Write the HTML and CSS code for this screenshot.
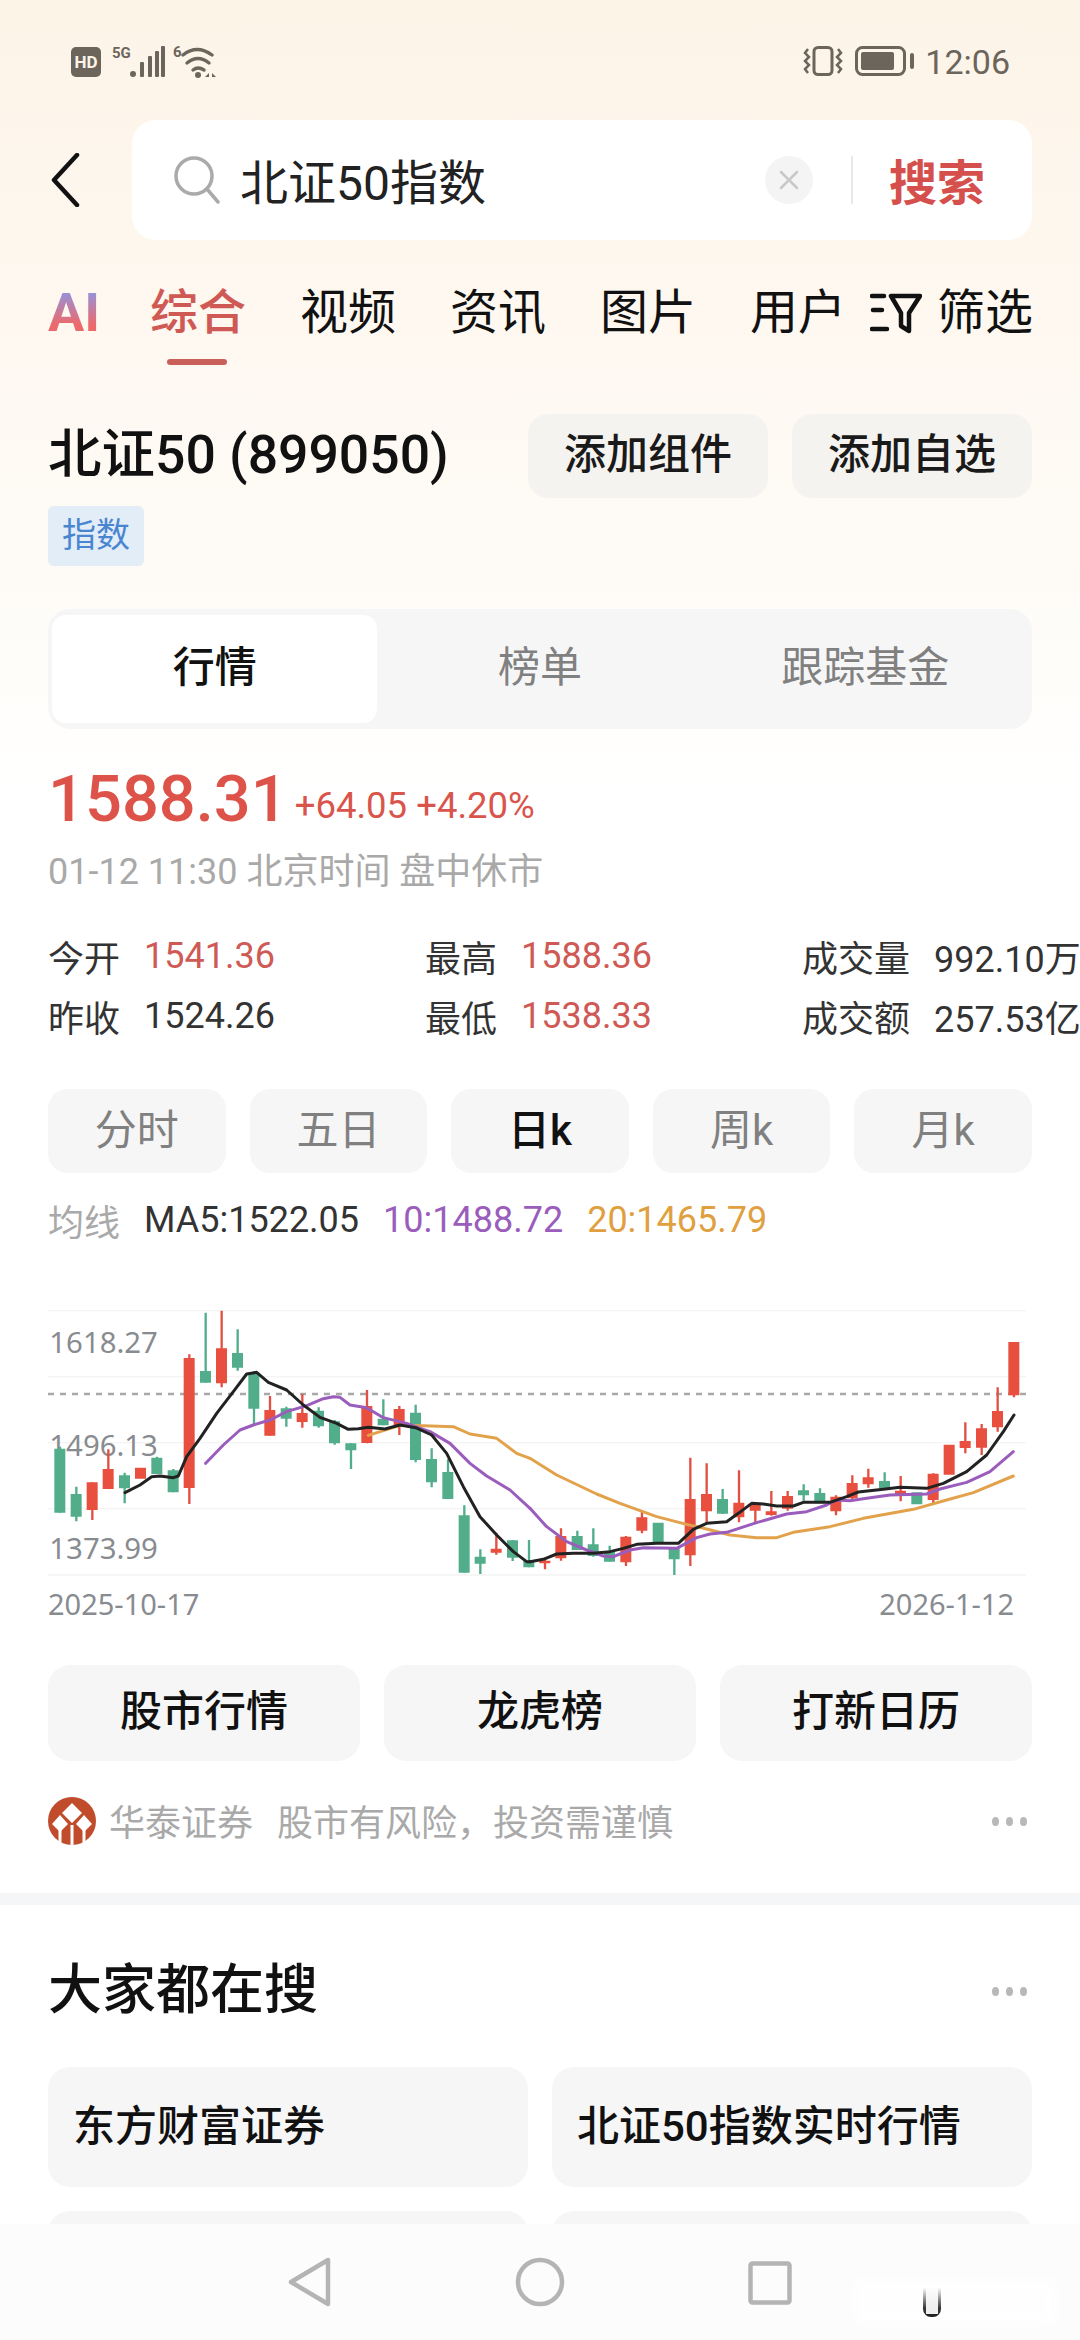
FILE: index.html
```html
<!DOCTYPE html>
<html lang="zh-CN">
<head>
<meta charset="utf-8">
<title>北证50指数</title>
<link rel="stylesheet" href="styles.css">
</head>
<body>
<div class="screen">
  <div class="status">
    <div class="status-left">
      <span class="hd">HD</span>
      <span class="net5g">5G</span>
      <svg class="bars" width="35" height="32" viewBox="0 0 35 32"><g fill="#6c655c"><circle cx="3" cy="28" r="3"/><rect x="10" y="16" width="4" height="15" rx="1"/><rect x="18" y="10" width="4" height="21" rx="1"/><rect x="25" y="5" width="4" height="26" rx="1"/><rect x="31" y="0" width="4" height="31" rx="1"/></g></svg>
      <span class="net6">6</span>
      <svg class="wifi" width="36" height="32" viewBox="0 0 36 32"><g fill="none" stroke="#6c655c" stroke-width="3.4" stroke-linecap="round"><path d="M2 9Q16-2 31 9"/><path d="M6 17Q17 8 28 17"/><path d="M12 24Q17 20 23 24"/></g><circle cx="17" cy="29" r="3" fill="#6c655c"/><path d="M24 31l4-4v4zM31 27l4 4h-4z" fill="#6c655c"/></svg>
    </div>
    <div class="status-right">
      <svg class="vib" width="40" height="30" viewBox="0 0 40 30"><rect x="11" y="1.500" width="18" height="27" rx="4" fill="none" stroke="#6c655c" stroke-width="3"/><g fill="none" stroke="#6c655c" stroke-width="2.500"><path d="M5 3L2 7l4 4-4 4 4 4-4 4 3 4"/><path d="M35 3l3 4-4 4 4 4-4 4 4 4-3 4"/></g></svg>
      <svg class="batt" width="60" height="30" viewBox="0 0 60 30"><rect x="1.500" y="1.500" width="48" height="27" rx="6" fill="none" stroke="#6c655c" stroke-width="3"/><rect x="6" y="6" width="33" height="18" rx="2" fill="#6c655c"/><rect x="55" y="7" width="4" height="16" rx="2" fill="#6c655c"/></svg>
      <span class="time">12:06</span>
    </div>
  </div>

  <div class="searchbar">
    <svg class="back" width="30" height="54" viewBox="0 0 30 54"><path d="M27 2L4 27l23 25" fill="none" stroke="#111" stroke-width="4.500" stroke-linecap="round" stroke-linejoin="round"/></svg>
    <div class="searchbox">
      <svg class="mag" width="48" height="48" viewBox="0 0 48 48"><circle cx="21" cy="20" r="18" fill="none" stroke="#aaa" stroke-width="3.500"/><path d="M34 33l11 13" stroke="#aaa" stroke-width="3.500" stroke-linecap="round"/></svg>
      <span class="query">北证50指数</span>
      <span class="clear"><svg width="22" height="22" viewBox="0 0 22 22"><path d="M3 3l16 16M19 3L3 19" stroke="#c9c9c9" stroke-width="2.500" stroke-linecap="round"/></svg></span>
      <span class="sep"></span>
      <span class="go">搜索</span>
    </div>
  </div>

  <div class="tabs">
    <span class="ai">AI</span>
    <span class="tab tab-on">综合</span>
    <span class="tab">视频</span>
    <span class="tab">资讯</span>
    <span class="tab">图片</span>
    <span class="tab">用户</span>
    <span class="filter">
      <svg width="52" height="42" viewBox="0 0 52 42"><g fill="none" stroke="#111" stroke-width="4.500" stroke-linejoin="round" stroke-linecap="round"><path d="M2 4h12M3 18h9M2 37h15"/><path d="M21 4h29L39 21v18l-8-5V21z"/></g></svg>
      <span>筛选</span>
    </span>
  </div>

  <div class="stock-head">
    <h1 class="stock-name">北证50 (899050)</h1>
    <span class="ghost-btn">添加组件</span>
    <span class="ghost-btn">添加自选</span>
  </div>
  <span class="badge">指数</span>

  <div class="segment">
    <span class="seg seg-on">行情</span>
    <span class="seg">榜单</span>
    <span class="seg">跟踪基金</span>
  </div>

  <div class="price-row">
    <span class="price">1588.31</span>
    <span class="change">+64.05 +4.20%</span>
  </div>
  <div class="date">01-12 11:30 北京时间 盘中休市</div>

  <div class="stats">
    <div class="stat"><span>今开</span><b class="up">1541.36</b></div>
    <div class="stat"><span>最高</span><b class="up">1588.36</b></div>
    <div class="stat"><span>成交量</span><b>992.10万</b></div>
    <div class="stat"><span>昨收</span><b>1524.26</b></div>
    <div class="stat"><span>最低</span><b class="up">1538.33</b></div>
    <div class="stat"><span>成交额</span><b>257.53亿</b></div>
  </div>

  <div class="periods">
    <span class="period">分时</span>
    <span class="period">五日</span>
    <span class="period period-on">日k</span>
    <span class="period">周k</span>
    <span class="period">月k</span>
  </div>

  <div class="ma">
    <span class="ma-label">均线</span>
    <span class="ma5">MA5:1522.05</span>
    <span class="ma10">10:1488.72</span>
    <span class="ma20">20:1465.79</span>
  </div>

  <svg class="chart" width="984" height="320" viewBox="54 0 2952 960">
    <g class="grid">
      <path d="M54 62H2988M54 260H2988M54 458H2988M54 656H2988M54 855H2988"/>
    </g>
    <path class="dash" d="M54 312H2988"/>
    <g class="axis">
      <text x="58" y="190">1618.27</text>
      <text x="58" y="497">1496.13</text>
      <text x="58" y="808">1373.99</text>
    </g>
    <!-- green wicks and bodies, left half -->
    <path class="w g" d="M90 470V668M139 590V694M284 548V640M381 500V552M430 537V607M527 68V278M623 118V242M672 243V405M769 350V410M866 352V413M914 390V464M963 460V537M1060 328V406M1157 344V517M1205 475V592M1254 508V627M1303 646V848M1351 778V852M1448 750V813M1497 750V832"/>
    <path class="b g" d="M73 476h33v192h-33zM122 612h33v68h-33zM267 556h33v39h-33zM364 503h33v49h-33zM413 541h33v66h-33zM510 243h33v35h-33zM606 189h33v44h-33zM655 250h33v106h-33zM752 355h33v31h-33zM849 362h33v47h-33zM897 394h33v66h-33zM946 460h33v21h-33zM1043 386h33v20h-33zM1140 368h33v142h-33zM1188 507h33v70h-33zM1237 546h33v81h-33zM1286 676h33v172h-33zM1334 800h33v21h-33zM1431 751h33v52h-33zM1480 812h33v20h-33z"/>
    <path class="w r" d="M187 577V690M235 478V597M478 193V642M575 62V292M720 318V437M817 312V413M1011 300V460M1108 348V435M1399 728V794M1545 810V838"/>
    <path class="b r" d="M170 577h33v83h-33zM218 537h33v60h-33zM315 533h33v33h-33zM461 204h33v390h-33zM558 175h33v105h-33zM703 360h33v77h-33zM800 369h33v27h-33zM994 348h33v111h-33zM1091 357h33v50h-33zM1382 776h33v12h-33zM1528 812h33v8h-33z"/>
    <!-- right half, measured from x = 1500 -->
    <g transform="translate(1500 0)">
      <path class="w g" d="M142 722V780M190 715V800M239 767V815M433 775V855M578 597V672M821 583V632M870 595V640M1064 547V597"/>
      <path class="b g" d="M125 738h33v42h-33zM173 763h33v35h-33zM222 785h33v30h-33zM368 698h33v62h-33zM416 775h33v33h-33zM561 627h33v44h-33zM804 601h33v15h-33zM853 609h33v31h-33zM1047 573h33v22h-33zM1144 607h33v36h-33z"/>
      <path class="w r" d="M93 715V812M288 738V828M336 665V730M481 503V828M530 520V700M627 541V697M676 640V697M724 603V677M773 603V662M918 616V676M967 556V632M1015 536V593M1112 558V634M1210 550V640M1306 397V490M1355 402V495M1403 292V425M1452 156V322"/>
      <path class="b r" d="M76 738h33v67h-33zM271 740h33v77h-33zM319 682h33v40h-33zM464 627h33v169h-33zM513 612h33v52h-33zM610 638h33v44h-33zM659 640h33v22h-33zM707 664h33v11h-33zM756 618h33v38h-33zM901 620h33v44h-33zM950 579h33v46h-33zM998 562h33v21h-33zM1095 602h33v14h-33zM1193 551h33v79h-33zM1241 464h33v90h-33zM1289 453h33v21h-33zM1338 415h33v58h-33zM1386 363h33v49h-33zM1435 156h33v160h-33z"/>
    </g>
    <polyline class="line orange" points="1015,436 1060,422 1110,406 1180,407 1270,410 1320,432 1400,445 1460,490 1500,505"/>
    <polyline class="line purple" points="527,520 580,465 630,420 670,405 720,390 770,365 830,347 880,326 910,320 930,322 960,345 1010,353 1060,383 1130,400 1200,425 1260,460 1320,520 1370,558 1440,600 1500,655"/>
    <polyline class="line black" points="285,608 330,585 365,560 390,558 430,563 445,558 470,500 510,445 560,370 610,305 650,252 680,247 715,277 770,300 820,345 870,382 920,400 955,418 985,416 1015,412 1065,417 1110,405 1157,413 1205,435 1250,490 1300,590 1350,680 1400,735 1450,785 1490,815 1500,815"/>
    <g transform="translate(1500 0)">
      <polyline class="line orange" points="0,505 80,555 200,612 270,640 380,680 470,703 530,717 600,735 680,743 740,743 790,727 900,710 1000,685 1150,658 1250,630 1330,608 1450,558"/>
      <polyline class="line purple" points="0,655 50,710 110,755 170,780 220,798 250,800 300,780 340,773 440,775 500,743 540,732 590,727 680,698 770,672 830,665 890,645 920,630 960,632 1010,625 1080,615 1190,612 1230,597 1310,577 1380,545 1450,485"/>
      <polyline class="line black" points="0,815 40,808 80,792 130,790 190,790 240,785 280,775 320,763 380,760 445,760 490,718 530,700 590,695 625,670 665,640 700,642 740,648 790,648 820,637 900,637 950,620 985,606 1060,598 1110,592 1190,595 1240,580 1310,545 1370,495 1420,425 1452,375"/>
    </g>
  </svg>
  <div class="chart-dates"><span>2025-10-17</span><span>2026-1-12</span></div>

  <div class="quick">
    <span class="quick-btn">股市行情</span>
    <span class="quick-btn">龙虎榜</span>
    <span class="quick-btn">打新日历</span>
  </div>

  <div class="broker">
    <svg class="logo" width="48" height="48" viewBox="0 0 48 48"><circle cx="24" cy="24" r="24" fill="#c04c2c"/><g fill="#fff"><path d="M24 6l10 10-10 10-10-10zM12 18l8 9-8 8-8-8zM36 18l8 9-8 8-8-8z"/><rect x="10.500" y="32" width="3" height="15"/><rect x="22.500" y="28" width="3" height="20"/><rect x="34.500" y="32" width="3" height="15"/></g></svg>
    <span class="broker-name">华泰证券</span>
    <span class="broker-note">股市有风险，投资需谨慎</span>
    <span class="dots"><i></i><i></i><i></i></span>
  </div>

  <div class="divider"></div>

  <div class="section-head">
    <h2>大家都在搜</h2>
    <span class="dots"><i></i><i></i><i></i></span>
  </div>

  <div class="hot">
    <span class="hot-item">东方财富证券</span>
    <span class="hot-item">北证50指数实时行情</span>
    <span class="hot-item"></span>
    <span class="hot-item"></span>
  </div>

  <div class="navbar">
    <svg width="44" height="50" viewBox="0 0 44 50"><path d="M40 3v44L3 25z" fill="none" stroke="#b4b4b4" stroke-width="4.500" stroke-linejoin="round"/></svg>
    <svg width="50" height="50" viewBox="0 0 50 50"><circle cx="25" cy="25" r="22" fill="none" stroke="#b4b4b4" stroke-width="4.500"/></svg>
    <svg width="44" height="44" viewBox="0 0 44 44"><rect x="2.500" y="2.500" width="39" height="39" rx="2" fill="none" stroke="#b4b4b4" stroke-width="4.500"/></svg>
    <div class="mark"></div>
    <span class="mark-u"></span>
  </div>
</div>
</body>
</html>
```

FILE: styles.css
```css
* { box-sizing: border-box; }
html, body { margin: 0; padding: 0; }
body {
  width: 1080px;
  height: 2340px;
  overflow: hidden;
  background: #fff;
  color: #111;
  font-family: Roboto, "Noto Sans CJK SC", sans-serif;
}
.screen {
  position: relative;
  width: 1080px;
  height: 2340px;
  overflow: hidden;
  background: linear-gradient(180deg, #fdf4e8 0, #fef7ee 240px, #fefaf4 480px, #fffefc 720px, #fff 800px);
}

/* status bar */
.status {
  height: 120px;
  padding: 0 70px 0 71px;
  display: flex;
  justify-content: space-between;
  align-items: flex-start;
  color: #6c655c;
}
.status-left, .status-right { display: flex; align-items: flex-start; padding-top: 45px; }
.hd {
  width: 30px; height: 30px; margin-top: 2px;
  background: #6c655c; color: #fdf4e8; border-radius: 5px;
  font: 700 17px/30px Roboto, sans-serif; text-align: center;
}
.net5g { margin-left: 11px; font: 700 15px/16px Roboto, sans-serif; width: 18px; }
.bars { margin-top: 1px; }
.net6 { margin-left: 8px; font: 700 15px/14px Roboto, sans-serif; width: 9px; }
.wifi { margin-left: -1px; margin-top: 1px; }
.vib { margin-right: 12px; margin-top: 1px; }
.batt { margin-top: 1px; margin-right: 10px; }
.time { font: 400 34px/34px Roboto, sans-serif; }

/* search */
.searchbar { height: 120px; padding: 0 48px 0 50px; display: flex; align-items: center; }
.back { flex: none; }
.searchbox {
  margin-left: 52px; flex: 1; height: 120px;
  background: #fff; border-radius: 24px;
  display: flex; align-items: center;
  padding-left: 41px;
}
.mag { flex: none; }
.query { margin-left: 19px; padding-bottom: 3px; font-size: 48px; color: #222; flex: 1; }
.clear {
  width: 48px; height: 48px; border-radius: 50%; background: #f4f4f4;
  display: flex; align-items: center; justify-content: center;
}
.sep { width: 2px; height: 48px; background: #e8e8e8; margin-left: 38px; }
.go { margin: 0 47px 0 36px; padding-bottom: 3px; font-size: 48px; font-weight: 700; color: #d5504c; }

/* tabs */
.tabs { height: 134px; padding: 50px 48px 0 48px; display: flex; align-items: flex-start; position: relative; }
.ai {
  width: 60px; margin-right: 42px;
  font: 700 54px/46px Roboto, sans-serif;
  background: linear-gradient(180deg, #8f95e2 0, #ec6a6c 75%);
  -webkit-background-clip: text; background-clip: text; color: transparent;
}
.tab { width: 96px; margin-right: 54px; font-size: 48px; line-height: 46px; white-space: nowrap; position: relative; }
.tab-on { color: #cf5a55; font-weight: 500; }
.tab-on::after {
  content: ""; position: absolute; left: 17px; top: 69px;
  width: 60px; height: 6px; border-radius: 3px; background: #c9605a;
}
.filter {
  position: absolute; right: 47px; top: 50px;
  display: flex; align-items: center; font-size: 48px; line-height: 46px;
}
.filter svg { margin-right: 15px; }

/* stock header */
.stock-head { padding: 40px 48px 0 48px; display: flex; align-items: center; }
.stock-name { margin: 0 auto 0 0; padding-bottom: 2px; font-size: 53.500px; line-height: 82px; font-weight: 500; }
.ghost-btn {
  width: 240px; height: 84px; margin-left: 24px; padding-bottom: 12px;
  background: #f5f3ef; border-radius: 20px;
  display: flex; align-items: center; justify-content: center;
  font-size: 42px; font-weight: 500; color: #1a1a1a;
}
.badge {
  display: block; width: 96px; height: 60px; margin: 8px 0 0 48px;
  background: #e3edf8; border-radius: 6px; color: #4a86d0;
  font-size: 34px; line-height: 58px; text-align: center;
}

/* segment */
.segment {
  margin: 43px 48px 0 48px; height: 120px; padding: 6px 4px;
  background: #f6f6f6; border-radius: 22px;
  display: grid; grid-template-columns: 1fr 1fr 1fr;
}
.seg { display: flex; align-items: center; justify-content: center; padding-bottom: 12px; font-size: 42px; color: #808080; border-radius: 14px; }
.seg-on { background: #fff; color: #111; font-weight: 500; }

/* price */
.price-row { margin: 34px 0 0 48px; height: 72px; display: flex; align-items: center; }
.price { font-size: 65px; font-weight: 500; color: #dd5349; line-height: 72px; }
.change { margin-left: 7px; margin-top: 12px; font-size: 36.500px; color: #d9554c; }
.date { margin: 15px 0 0 48px; font-size: 36px; line-height: 44px; color: #a9a9a9; }

.stats {
  margin: 32px 0 0 48px; width: 1131px;
  display: grid; grid-template-columns: repeat(3, 377px); grid-auto-rows: 60px;
}
.stat { display: flex; align-items: center; font-size: 36px; color: #333; white-space: nowrap; }
.stat b { font-weight: 400; margin-left: 24px; }
.stat b.up { color: #cf5a55; }

.periods { margin: 43px 48px 0 48px; display: grid; grid-template-columns: repeat(5, 1fr); gap: 24px; }
.period {
  height: 84px; background: #f6f6f6; border-radius: 20px; padding-bottom: 10px;
  display: flex; align-items: center; justify-content: center;
  font-size: 42px; color: #808080;
}
.period-on { color: #111; font-weight: 500; }

.ma { margin: 25px 0 0 48px; height: 44px; display: flex; align-items: center; font-size: 36px; color: #333; }
.ma-label { color: #a9a9a9; width: 96px; }
.ma10 { color: #9a5dbc; margin-left: 24px; }
.ma20 { color: #e0a040; margin-left: 24px; }

/* chart */
.chart { display: block; margin: 48px 0 0 48px; }
.grid path { stroke: #f4f4f4; stroke-width: 4; fill: none; }
.dash { stroke: #a8a8a8; stroke-width: 8; stroke-dasharray: 18 18; fill: none; }
.axis text { font-family: "Noto Sans", sans-serif; font-size: 88px; fill: #888b90; }
.w { fill: none; stroke-width: 7; }
.w.g { stroke: #52ae8a; }
.w.r { stroke: #e25044; }
.b.g { fill: #52ae8a; }
.b.r { fill: #e84f3f; }
.line { fill: none; stroke-width: 9; stroke-linejoin: round; stroke-linecap: round; }
.black { stroke: #222; }
.purple { stroke: #9a5dbc; }
.orange { stroke: #e2a24c; }
.chart-dates {
  margin: -26px 66px 0 48px; display: flex; justify-content: space-between;
  font-family: "Noto Sans", sans-serif; font-size: 29px; line-height: 40px; color: #888b90;
}

/* quick */
.quick { margin: 41px 48px 0 48px; display: grid; grid-template-columns: repeat(3, 1fr); gap: 24px; }
.quick-btn {
  height: 96px; background: #f6f6f6; border-radius: 22px; padding-bottom: 12px;
  display: flex; align-items: center; justify-content: center;
  font-size: 42px; font-weight: 500;
}

.broker { margin: 36px 53px 0 48px; height: 48px; display: flex; align-items: center; font-size: 36px; color: #a9a9a9; }
.broker span:not(.dots) { padding-bottom: 3px; }
.broker-name { margin-left: 13px; }
.broker-note { margin-left: 24px; flex: 1; }
.dots { display: flex; gap: 7px; }
.dots i { width: 7px; height: 9px; border-radius: 50%; background: #b8b8b8; display: block; }

.divider { height: 12px; margin-top: 48px; background: #f5f6f7; }

.section-head { margin: 56px 53px 0 48px; height: 60px; display: flex; align-items: center; justify-content: space-between; }
.section-head h2 { margin: 0; font-size: 54px; font-weight: 500; line-height: 60px; }

.hot {
  margin: 46px 48px 0 48px;
  display: grid; grid-template-columns: 1fr 1fr; gap: 24px;
}
.hot-item {
  height: 120px; background: #f6f6f6; border-radius: 22px;
  padding: 0 0 9px 25px; display: flex; align-items: center;
  font-size: 42px; font-weight: 500;
}

.navbar {
  position: absolute; left: 0; right: 0; bottom: 0; height: 116px;
  background: #fcfcfc;
}
.navbar svg:nth-child(1) { position: absolute; left: 288px; top: 33px; }
.navbar svg:nth-child(2) { position: absolute; left: 515px; top: 33px; }
.navbar svg:nth-child(3) { position: absolute; left: 748px; top: 37px; }
.mark {
  position: absolute; left: 855px; top: 56px; width: 200px; height: 44px;
  background: #fff; opacity: .8; filter: blur(4px);
}
.mark-u {
  position: absolute; left: 923px; top: 64px; width: 18px; height: 29px;
  border-radius: 0 0 8px 8px;
  background:
    linear-gradient(180deg, #fcfcfc 0, rgba(252, 252, 252, 0) 70%),
    linear-gradient(90deg, #333 3px, transparent 3px, transparent 15px, #333 15px),
    linear-gradient(0deg, #222 3px, #eee 3px);
}
```
